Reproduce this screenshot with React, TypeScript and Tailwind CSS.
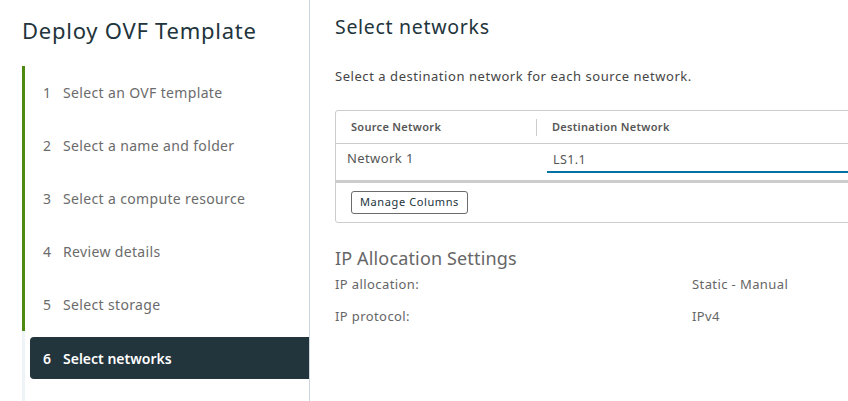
const FONT = "font-['Noto_Sans','Open_Sans',sans-serif]";

const steps = [
  'Select an OVF template',
  'Select a name and folder',
  'Select a compute resource',
  'Review details',
  'Select storage',
];

function StepList() {
  return (
    <div className="ml-[22px] flex flex-1 flex-col">
      {steps.map((label, i) => (
        <div key={label} className="flex h-[53px] items-center border-l-[3px] border-[#4f8a10] pl-[18px] text-[14px] tracking-[0.35px] text-[#6b6b6b]">
          <span className="w-[20px]">{i + 1}</span>
          <span>{label}</span>
        </div>
      ))}
      <div className="flex flex-1 flex-col border-l-[3px] border-[#eef3f6] pt-[6px] pl-[5px]">
        <div className="flex h-[42px] items-center rounded-l-[4px] bg-[#22343c] pl-[13px] text-[14px] font-semibold text-white">
          <span className="w-[20px]">6</span>
          <span>Select networks</span>
        </div>
      </div>
    </div>
  );
}

export default function App() {
  return (
    <div className={`${FONT} flex h-[401px] w-[848px] overflow-hidden bg-white`}>
      <aside className="flex w-[310px] shrink-0 flex-col border-r border-[#ccd6dc]">
        <h1 className="pt-[15px] pl-[22px] text-[22px] leading-[30px] tracking-[0.75px] text-[#22343c]">Deploy OVF Template</h1>
        <div className="mt-[21px] flex flex-1 flex-col">
          <StepList />
        </div>
      </aside>

      <main className="flex min-w-0 flex-1 flex-col pl-[25px]">
        <h2 className="pt-[14px] text-[19.5px] leading-[26px] tracking-[0.7px] text-[#22343c]">Select networks</h2>
        <p className="mt-[26px] text-[13px] leading-[20px] tracking-[0.55px] text-[#454545]">
          Select a destination network for each source network.
        </p>

        <div className="mt-[24px] w-[600px] rounded-[3px] border border-[#cccccc]">
          <div className="flex h-[33px] items-center border-b border-[#cccccc] text-[11px] font-semibold tracking-[0.3px] text-[#565656]">
            <div className="flex w-[200px] items-center pl-[15px]">Source Network</div>
            <div className="h-[17px] w-px bg-[#cccccc]" />
            <div className="pl-[15px]">Destination Network</div>
          </div>
          <div className="flex h-[39px] border-b-[3px] border-[#cccccc] text-[13px] tracking-[0.4px]">
            <div className="w-[200px] pt-[5px] pl-[11px] text-[#565656]">Network 1</div>
            <div className="flex-1 pl-[11px]">
              <div className="mt-[6px] h-[23px] border-b-2 border-[#0072a3] pl-[6px] text-[12.5px] leading-[20px] text-[#565656]">LS1.1</div>
            </div>
          </div>
          <div className="flex h-[39px] items-center pl-[15px]">
            <button className="h-[23px] rounded-[3px] border border-[#6b6b6b] px-[8px] text-[11px] tracking-[0.6px] text-[#22343c]">
              Manage Columns
            </button>
          </div>
        </div>

        <h3 className="mt-[23px] text-[18px] leading-[24px] tracking-[0.15px] text-[#666666]">IP Allocation Settings</h3>
        <div className="mt-[5px] grid grid-cols-[357px_1fr] text-[13px] tracking-[0.4px] text-[#666666]">
          <div className="h-[32px] leading-[18px]">IP allocation:</div>
          <div className="h-[32px] leading-[18px]">Static - Manual</div>
          <div className="leading-[18px]">IP protocol:</div>
          <div className="leading-[18px]">IPv4</div>
        </div>
      </main>
    </div>
  );
}
